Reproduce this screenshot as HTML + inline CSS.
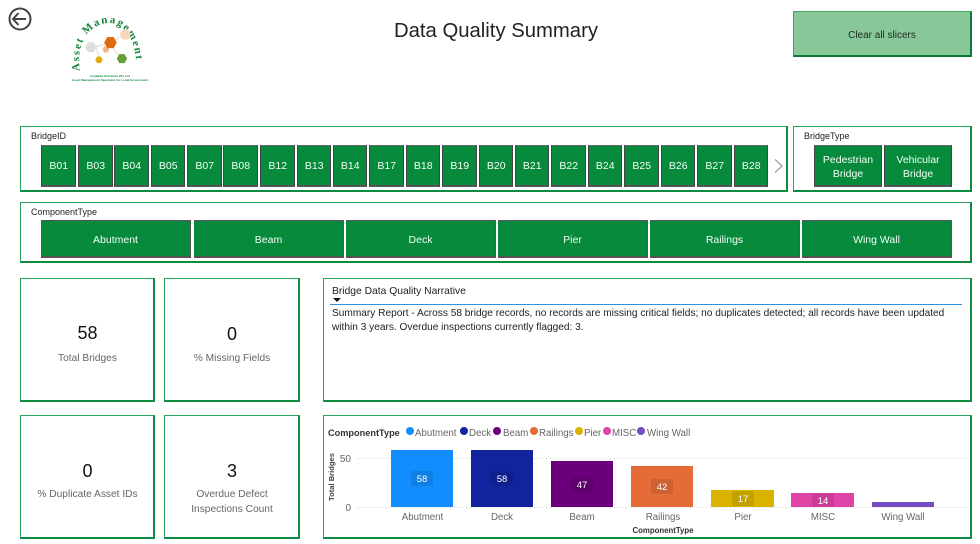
<!DOCTYPE html>
<html><head><meta charset="utf-8"><style>
html,body{margin:0;padding:0;background:#fff}
#p{position:relative;width:980px;height:544px;overflow:hidden;background:#fff;font-family:"Liberation Sans",sans-serif;color:#222}
#p div{position:absolute;box-sizing:border-box}
.box{border:1px solid #2aa561;border-right:2px solid #0d8c40;border-bottom:2px solid #0d8c40}
.b{background:#078a3c;color:#f2fff5;font-size:10.5px;text-align:center;border-bottom:2px solid #555;border-right:1px solid #444;border-left:1px solid #444;border-top:1px solid #666;top:145px;height:42px;width:34.5px;line-height:41px;padding-left:1px}
.c{background:#078a3c;color:#f2fff5;font-size:10.5px;text-align:center;top:220px;height:38px;width:150px;line-height:38px;border-right:1px solid #555;border-bottom:2px solid #555;border-top:1px solid #555}
.t{font-size:9px;color:#222;white-space:nowrap}
.num{font-size:18px;color:#111;text-align:center;line-height:20px}
.lab{font-size:10.2px;color:#666;text-align:center;line-height:15px}
</style></head><body><div id="p">

<svg style="position:absolute;left:0;top:0" width="170" height="95" viewBox="0 0 170 95">
<circle cx="20" cy="19" r="10.5" fill="none" stroke="#444" stroke-width="2"/>
<path d="M26 19H13M18.500 13L13 19l5.500 6" fill="none" stroke="#444" stroke-width="2"/>
<defs><path id="arc" d="M80 71C75 40 92 23 109 23C125 23 138 42 136 71"/></defs>
<text font-family="Liberation Serif,serif" font-size="11" font-weight="bold" fill="#15843c" letter-spacing="1.600"><textPath href="#arc">Asset Management</textPath></text>
<path d="M95 47L110 43L122 36M110 43L120 57M96 47L100 58" stroke="#ddd" fill="none"/>
<g transform="translate(107 46) scale(1.15) translate(-107 -46)">
<polygon points="128,36 125.500,40.300 120.500,40.300 118,36 120.500,31.700 125.500,31.700" fill="#fad5bd"/>
<polygon points="98,47 95.500,51.300 90.500,51.300 88,47 90.500,42.700 95.500,42.700" fill="#dedede"/>
<polygon points="109,49 107.500,51.600 104.500,51.600 103,49 104.500,46.400 107.500,46.400" fill="#f4b48c"/>
<polygon points="115.500,43 112.750,47.800 107.250,47.800 104.500,43 107.250,38.200 112.750,38.200" fill="#dd6a10"/>
<polygon points="103.300,58 101.600,60.900 98.400,60.900 96.700,58 98.400,55.100 101.600,55.100" fill="#e5ac10"/>
<polygon points="124.500,57 122.250,60.900 117.750,60.900 115.500,57 117.750,53.100 122.250,53.100" fill="#66a03c"/>
</g>
<text x="110" y="77" font-size="3.100" font-weight="bold" fill="#158a40" text-anchor="middle">Ismialaw Solutions Pty Ltd</text>
<text x="110" y="81" font-size="3.100" font-weight="bold" fill="#158a40" text-anchor="middle">Asset Management Specialist for Local Government</text>
</svg>

<div style="left:300px;top:18px;width:392px;text-align:center;font-size:20.3px;color:#222;line-height:26px;white-space:nowrap">Data Quality Summary</div>

<div style="left:793px;top:11px;width:179px;height:46px;background:#88c797;border:1px solid #3aa862;border-right:2px solid #0b7a36;border-bottom:2px solid #0b7a36;text-align:center;line-height:47px;font-size:10px;color:#1c2a20">Clear all slicers</div>

<div class="box" style="left:20px;top:126px;width:768px;height:66px"></div>
<div class="t" style="left:31px;top:131px">BridgeID</div>
<div class="b" style="left:41px">B01</div><div class="b" style="left:78px">B03</div><div class="b" style="left:114px">B04</div><div class="b" style="left:150.500px">B05</div><div class="b" style="left:187px">B07</div><div class="b" style="left:223px">B08</div><div class="b" style="left:260px">B12</div><div class="b" style="left:296.500px">B13</div><div class="b" style="left:332.500px">B14</div><div class="b" style="left:369px">B17</div><div class="b" style="left:405.500px">B18</div><div class="b" style="left:442px">B19</div><div class="b" style="left:478.500px">B20</div><div class="b" style="left:514.500px">B21</div><div class="b" style="left:551px">B22</div><div class="b" style="left:587.500px">B24</div><div class="b" style="left:624px">B25</div><div class="b" style="left:660.500px">B26</div><div class="b" style="left:697px">B27</div><div class="b" style="left:733.500px">B28</div>
<svg style="position:absolute;left:772px;top:158px" width="14" height="16"><path d="M3 1.500L10 8L3 14.500" fill="none" stroke="#888" stroke-width="1"/></svg>

<div class="box" style="left:793px;top:126px;width:179px;height:66px"></div>
<div class="t" style="left:804px;top:131px">BridgeType</div>
<div class="b" style="left:814px;width:68px;line-height:13.500px;padding:8px 0 0">Pedestrian<br>Bridge</div>
<div class="b" style="left:884px;width:68px;line-height:13.500px;padding:8px 0 0">Vehicular<br>Bridge</div>

<div class="box" style="left:20px;top:202px;width:952px;height:61px"></div>
<div class="t" style="left:31px;top:207px">ComponentType</div>
<div class="c" style="left:41px">Abutment</div><div class="c" style="left:194px">Beam</div><div class="c" style="left:346px">Deck</div><div class="c" style="left:498px">Pier</div><div class="c" style="left:650px">Railings</div><div class="c" style="left:802px">Wing Wall</div>

<div class="box" style="left:20px;top:278px;width:135px;height:124px"></div>
<div class="num" style="left:20px;top:323px;width:135px">58</div><div class="lab" style="left:20px;top:351px;width:135px">Total Bridges</div>
<div class="box" style="left:164px;top:278px;width:136px;height:124px"></div>
<div class="num" style="left:164px;top:324px;width:136px">0</div><div class="lab" style="left:164px;top:351px;width:136px">% Missing Fields</div>
<div class="box" style="left:20px;top:415px;width:135px;height:124px"></div>
<div class="num" style="left:20px;top:461px;width:135px">0</div><div class="lab" style="left:20px;top:487px;width:135px">% Duplicate Asset IDs</div>
<div class="box" style="left:164px;top:415px;width:136px;height:124px"></div>
<div class="num" style="left:164px;top:461px;width:136px">3</div><div class="lab" style="left:164px;top:487px;width:136px">Overdue Defect<br>Inspections Count</div>

<div class="box" style="left:323px;top:278px;width:649px;height:124px"></div>
<div style="left:332px;top:286px;font-size:10.300px;color:#222;white-space:nowrap">Bridge Data Quality Narrative</div>
<div style="left:333px;top:298px;width:0;height:0;border-left:4px solid transparent;border-right:4px solid transparent;border-top:4px solid #111"></div>
<div style="left:330px;top:304px;width:632px;height:1px;background:#2f8fe0"></div>
<div style="left:332px;top:307px;width:630px;font-size:10.150px;line-height:13.500px;color:#222;white-space:nowrap">Summary Report - Across 58 bridge records, no records are missing critical fields; no duplicates detected; all records have been updated<br>within 3 years. Overdue inspections currently flagged: 3.</div>

<div class="box" style="left:323px;top:415px;width:649px;height:124px"></div>
<svg style="position:absolute;left:323px;top:415px" width="649" height="124" viewBox="323 415 649 124" font-family="Liberation Sans,sans-serif">
<text x="328" y="436" font-size="9.200" font-weight="bold" fill="#333">ComponentType</text>
<g font-size="9.700" fill="#666">
<circle cx="410" cy="431" r="4" fill="#118dff"/><text x="415" y="436">Abutment</text>
<circle cx="464" cy="431" r="4" fill="#12239e"/><text x="469" y="436">Deck</text>
<circle cx="497" cy="431" r="4" fill="#6b007b"/><text x="503" y="436">Beam</text>
<circle cx="534" cy="431" r="4" fill="#e66c37"/><text x="539" y="436">Railings</text>
<circle cx="579" cy="431" r="4" fill="#d9b300"/><text x="584" y="436">Pier</text>
<circle cx="607" cy="431" r="4" fill="#e044a7"/><text x="612" y="436">MISC</text>
<circle cx="641" cy="431" r="4" fill="#744ec2"/><text x="647" y="436">Wing Wall</text>
</g>
<path d="M358 458.500H968M358 507.500H968" stroke="#ccc" stroke-dasharray="1 3"/>
<text x="334" y="477" font-size="7.600" font-weight="bold" fill="#444" text-anchor="middle" transform="rotate(-90 334 477)">Total Bridges</text>
<text x="351" y="462" font-size="10" fill="#666" text-anchor="end">50</text>
<text x="351" y="511" font-size="10" fill="#666" text-anchor="end">0</text>
<rect x="391" y="450" width="62" height="57" fill="#118dff"/>
<rect x="471" y="450" width="62" height="57" fill="#12239e"/>
<rect x="551" y="461" width="62" height="46" fill="#6b007b"/>
<rect x="631" y="466" width="62" height="41" fill="#e66c37"/>
<rect x="711" y="490" width="63" height="17" fill="#d9b300"/>
<rect x="791" y="493" width="63" height="14" fill="#e044a7"/>
<rect x="872" y="502" width="62" height="5" fill="#744ec2"/>
<g fill="#000" fill-opacity=".1">
<rect x="411" y="471" width="22" height="15" rx="2"/><rect x="491" y="471" width="22" height="15" rx="2"/><rect x="571" y="477" width="22" height="15" rx="2"/><rect x="651" y="479" width="22" height="15" rx="2"/><rect x="732" y="491" width="22" height="15" rx="2"/><rect x="812" y="493" width="22" height="14" rx="2"/>
</g>
<g font-size="9.500" fill="#fff" text-anchor="middle">
<text x="422" y="482">58</text><text x="502" y="482">58</text><text x="582" y="488">47</text><text x="662" y="490">42</text><text x="743" y="502">17</text><text x="823" y="504">14</text>
</g>
<g font-size="9.700" fill="#666" text-anchor="middle">
<text x="422.500" y="520">Abutment</text><text x="502" y="520">Deck</text><text x="582" y="520">Beam</text><text x="663" y="520">Railings</text><text x="743" y="520">Pier</text><text x="823" y="520">MISC</text><text x="903" y="520">Wing Wall</text>
</g>
<text x="663" y="533" font-size="7.800" font-weight="bold" fill="#333" text-anchor="middle">ComponentType</text>
</svg>

</div></body></html>
